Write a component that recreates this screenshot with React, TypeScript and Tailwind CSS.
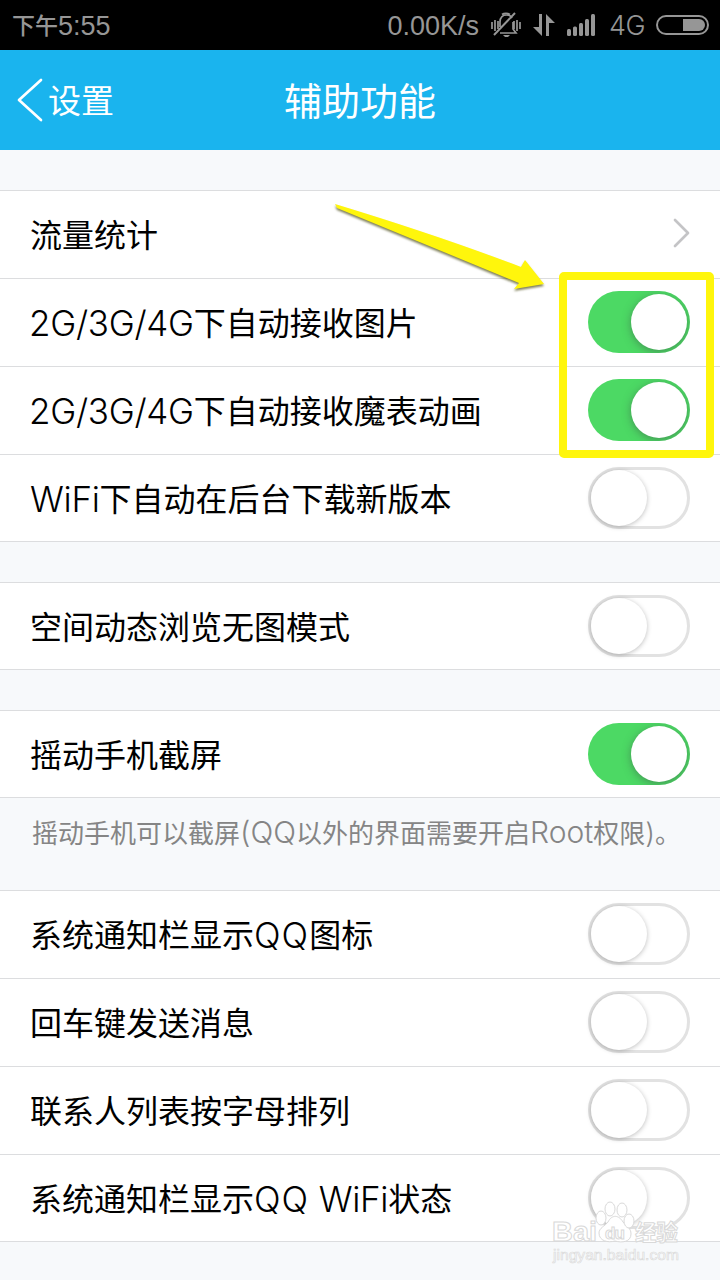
import type { ReactNode } from "react";

function Latin({ children, className = "tracking-[-0.3px]" }: { children: ReactNode; className?: string }) {
  return <span className={`relative top-px font-['Inter'] text-[35px] leading-none font-light ${className}`}>{children}</span>;
}

function NoteLatin({ children }: { children: ReactNode }) {
  return <span className="font-['Inter'] text-[30px] leading-none font-light">{children}</span>;
}

function Toggle({ on }: { on: boolean }) {
  if (on) {
    return (
      <span className="flex h-[62px] w-[102px] shrink-0 items-center justify-end overflow-hidden rounded-full bg-[#4cd964] pr-[3px]">
        <span className="size-14 rounded-full bg-white shadow-[0_2px_9px_rgba(60,80,70,0.5)]" />
      </span>
    );
  }
  return (
    <span className="flex h-[62px] w-[102px] shrink-0 items-center justify-start rounded-full border-[3px] border-[#e2e2e2] bg-white">
      <span className="size-14 rounded-full bg-white shadow-[0_1px_5px_rgba(0,0,0,0.26)]" />
    </span>
  );
}

function Row({ children, control }: { children: ReactNode; control: ReactNode }) {
  return (
    <div className="flex h-[88px] items-center justify-between border-t border-[#dcdddf] bg-white px-[30px] pb-px last:border-b">
      <span className="whitespace-nowrap pb-[2px] text-[32px] leading-[48px] text-black">{children}</span>
      {control}
    </div>
  );
}

function StatusBar() {
  return (
    <div className="flex h-[50px] items-center justify-between bg-black pr-[11px] pl-3 text-[#969696]">
      <span className="flex items-center whitespace-nowrap pt-[2px] font-['Liberation_Sans','Noto_Sans_CJK_SC',sans-serif] text-[27px]">
        <span className="text-[23px] font-medium">下午</span>
        <span>5:55</span>
      </span>
      <div className="flex items-center">
        <span className="mr-[12px] pt-[2px] font-['Liberation_Sans',sans-serif] text-[27px]">0.00K/s</span>
        <svg className="mr-[12px]" width="30" height="26" viewBox="0 0 30 26" fill="none" stroke="currentColor" strokeWidth="1.7">
          <path d="M1 10v7M4 8v11M7 9v8M29 10v7M26 8v11M23 9v8" />
          <path d="M9 15V10C9 5 12 3 15.500 3C18 3 20 4 21 6M22 10V17L25 21H9M11 2.500C13 1 17 1 19 2.500" />
          <path d="M3 23L24 1" strokeWidth="2" />
          <path d="M12 23h7l-2 2h-3z" fill="currentColor" stroke="none" />
        </svg>
        <svg className="mr-[12px]" width="22" height="22" viewBox="0 0 22 22" fill="currentColor">
          <path d="M6 0H9V22L0 13H6ZM13 0L22 9H16V22H13Z" />
        </svg>
        <svg className="mr-[14px]" width="28" height="22" viewBox="0 0 28 22" fill="currentColor">
          <rect x="0" y="15" width="4" height="7" rx="1.500" />
          <rect x="6" y="12.500" width="4" height="9.500" rx="1.500" />
          <rect x="12" y="9" width="4" height="13" rx="1.500" />
          <rect x="18" y="5" width="4" height="17" rx="1.500" />
          <rect x="24" y="0" width="4" height="22" rx="1.500" />
        </svg>
        <span className="mr-[11px] w-[36px] whitespace-nowrap font-['Inter',sans-serif] text-[27px] leading-none font-[350] tracking-[-0.5px]">4G</span>
        <svg width="53" height="20" viewBox="0 0 53 20" fill="none">
          <rect x="1" y="1" width="51" height="18" rx="9" stroke="currentColor" strokeWidth="2" />
          <path d="M27 4H43A6 6 0 0 1 43 16H27Z" fill="currentColor" />
        </svg>
      </div>
    </div>
  );
}

function Header() {
  return (
    <div className="grid h-[100px] grid-cols-[1fr_auto_1fr] items-center bg-[#1ab4ee] text-white">
      <div className="flex items-center pl-[17px]">
        <svg width="26" height="44" viewBox="0 0 26 44" fill="none" stroke="currentColor" strokeWidth="2.700" strokeLinecap="round" strokeLinejoin="round">
          <path d="M24 2L2 22L24 42" />
        </svg>
        <span className="ml-[5px] text-[33px]">设置</span>
      </div>
      <h1 className="pb-[4px] text-[38px] font-normal">辅助功能</h1>
    </div>
  );
}

function Annotation() {
  return (
    <>
      <div className="absolute top-[272px] left-[559px] h-[186px] w-[155px] rounded-[5px] border-8 border-[#fff60c]" />
      <svg className="absolute top-[195px] left-[325px] drop-shadow-[0_2px_1px_rgba(60,60,0,0.65)]" width="230" height="105" viewBox="325 195 230 105">
        <path d="M335 204Q440 236 521 267L525 260L544 284L514 289L519 283L337 208Z" fill="#fff60c" />
      </svg>
    </>
  );
}

function Watermark() {
  return (
    <div className="absolute top-[1200px] left-[551px] h-[70px] w-[135px] text-white">
      <svg width="135" height="70" viewBox="0 0 135 70" fill="#fff" stroke="#d9d9d9" strokeWidth="1">
        <g fontFamily="Liberation Sans, Noto Sans CJK SC, sans-serif" fontWeight="700">
          <text x="1" y="41" fontSize="27" textLength="45" lengthAdjust="spacingAndGlyphs">Bai</text>
          <path d="M48 33C48 28 54 26 57 22C61 14 68 15 72 22C76 27 80 28 80 34C80 42 71 43 64 41C57 43 48 41 48 33Z" />
          <ellipse cx="50" cy="18" rx="5" ry="7" />
          <ellipse cx="59" cy="9" rx="5" ry="7" />
          <ellipse cx="71" cy="10" rx="5" ry="7" />
          <ellipse cx="78" cy="21" rx="5" ry="7" />
          <text x="54" y="39" fontSize="17" textLength="20">du</text>
          <text x="84" y="40" fontSize="22" textLength="43" lengthAdjust="spacingAndGlyphs">经验</text>
          <text x="2" y="60" fontSize="14" fontWeight="400" strokeWidth="0.6" textLength="126" lengthAdjust="spacingAndGlyphs">jingyan.baidu.com</text>
        </g>
      </svg>
    </div>
  );
}

export default function App() {
  return (
    <main className="relative h-[1280px] w-[720px] overflow-hidden bg-[#f7f9fb] font-['Noto_Sans_CJK_SC',sans-serif]">
      <StatusBar />
      <Header />
      <section className="mt-10">
        <Row
          control={
            <svg className="mb-[3px]" width="18" height="30" viewBox="0 0 18 30" fill="none" stroke="#c4c4c6" strokeWidth="2.700" strokeLinecap="round" strokeLinejoin="round">
              <path d="M3 2L16 15L3 28" />
            </svg>
          }
        >
          流量统计
        </Row>
        <Row control={<Toggle on />}><Latin className="-ml-px tracking-[-0.3px]">2G/3G/4G</Latin>下自动接收图片</Row>
        <Row control={<Toggle on />}><Latin className="-ml-px tracking-[-0.3px]">2G/3G/4G</Latin>下自动接收魔表动画</Row>
        <Row control={<Toggle on={false} />}><Latin>WiFi</Latin>下自动在后台下载新版本</Row>
      </section>
      <section className="mt-10">
        <Row control={<Toggle on={false} />}>空间动态浏览无图模式</Row>
      </section>
      <section className="mt-10">
        <Row control={<Toggle on />}>摇动手机截屏</Row>
      </section>
      <p className="h-[92px] whitespace-nowrap pt-[14px] pl-8 text-[26px] leading-10 text-[#858585]">
        摇动手机可以截屏<NoteLatin>(QQ</NoteLatin>以外的界面需要开启<NoteLatin>Root</NoteLatin>权限<span className="font-['Inter'] text-[28px] leading-none font-light">)</span>。
      </p>
      <section>
        <Row control={<Toggle on={false} />}>系统通知栏显示<Latin className="tracking-[1px]">QQ</Latin>图标</Row>
        <Row control={<Toggle on={false} />}>回车键发送消息</Row>
        <Row control={<Toggle on={false} />}>联系人列表按字母排列</Row>
        <Row control={<Toggle on={false} />}>系统通知栏显示<Latin className="tracking-[1px]">QQ</Latin><Latin> WiFi</Latin>状态</Row>
      </section>
      <Annotation />
      <Watermark />
    </main>
  );
}
